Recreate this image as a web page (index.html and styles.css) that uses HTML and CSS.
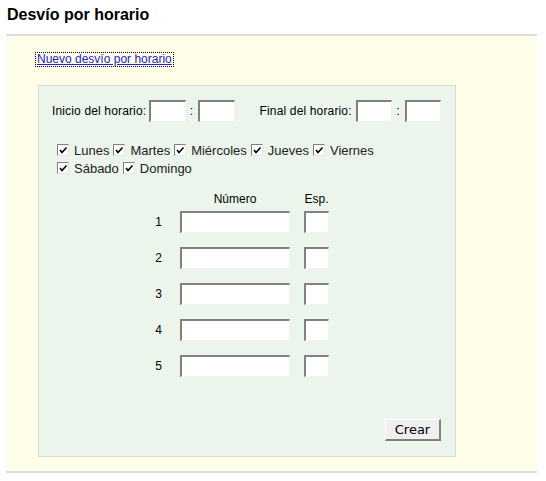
FILE: index.html
```html
<!DOCTYPE html>
<html lang="es">
<head>
<meta charset="utf-8">
<title>Desvío por horario</title>
<link rel="stylesheet" href="styles.css">
</head>
<body>
<div class="page">
  <h1 class="title">Desvío por horario</h1>
  <div class="box">
    <div class="linkline"><a class="newlink" href="#">Nuevo desvío por horario</a></div>
    <div class="panel">
      <div class="timerow">
        <span class="lbl">Inicio del horario:</span>
        <span class="field time"></span>
        <span class="colon">:</span>
        <span class="field time"></span>
        <span class="lbl final">Final del horario:</span>
        <span class="field time"></span>
        <span class="colon">:</span>
        <span class="field time"></span>
      </div>
      <div class="days">
        <div class="dayrow">
          <span class="cb"><svg viewBox="0 0 12 12" width="12" height="12"><polyline points="3,6 5,8.5 9.5,3.5" fill="none" stroke="#000" stroke-width="1.6"/></svg></span><span class="day">Lunes</span>
          <span class="cb"><svg viewBox="0 0 12 12" width="12" height="12"><polyline points="3,6 5,8.5 9.5,3.5" fill="none" stroke="#000" stroke-width="1.6"/></svg></span><span class="day">Martes</span>
          <span class="cb"><svg viewBox="0 0 12 12" width="12" height="12"><polyline points="3,6 5,8.5 9.5,3.5" fill="none" stroke="#000" stroke-width="1.6"/></svg></span><span class="day">Miércoles</span>
          <span class="cb"><svg viewBox="0 0 12 12" width="12" height="12"><polyline points="3,6 5,8.5 9.5,3.5" fill="none" stroke="#000" stroke-width="1.6"/></svg></span><span class="day">Jueves</span>
          <span class="cb"><svg viewBox="0 0 12 12" width="12" height="12"><polyline points="3,6 5,8.5 9.5,3.5" fill="none" stroke="#000" stroke-width="1.6"/></svg></span><span class="day">Viernes</span>
        </div>
        <div class="dayrow">
          <span class="cb"><svg viewBox="0 0 12 12" width="12" height="12"><polyline points="3,6 5,8.5 9.5,3.5" fill="none" stroke="#000" stroke-width="1.6"/></svg></span><span class="day">Sábado</span>
          <span class="cb"><svg viewBox="0 0 12 12" width="12" height="12"><polyline points="3,6 5,8.5 9.5,3.5" fill="none" stroke="#000" stroke-width="1.6"/></svg></span><span class="day">Domingo</span>
        </div>
      </div>
      <div class="numhead">
        <span></span>
        <span class="hcell">Número</span>
        <span class="hcell esphead">Esp.</span>
      </div>
      <div class="numgrid">
        <span class="idx">1</span><span class="field num"></span><span class="field esp"></span>
        <span class="idx">2</span><span class="field num"></span><span class="field esp"></span>
        <span class="idx">3</span><span class="field num"></span><span class="field esp"></span>
        <span class="idx">4</span><span class="field num"></span><span class="field esp"></span>
        <span class="idx">5</span><span class="field num"></span><span class="field esp"></span>
      </div>
      <div class="actions">
        <button class="btn" type="button">Crear</button>
      </div>
    </div>
  </div>
</div>
</body>
</html>
```

FILE: styles.css
```css
html, body {
  margin: 0;
  padding: 0;
  background: #ffffff;
}
body {
  font-family: "Liberation Sans", Arial, sans-serif;
  font-size: 12px;
  color: #000;
}
.page {
  margin-left: 6px;
  width: 531px;
}
.title {
  margin: 0;
  box-sizing: border-box;
  height: 36px;
  padding: 5px 0 0 1px;
  font-size: 16px;
  line-height: 19px;
  font-weight: bold;
  color: #000;
  border-bottom: 2px solid #dcdcdc;
}
.box {
  background: #ffffe9;
  border-bottom: 2px solid #dcdcdc;
  padding: 17px 0 14px 32px;
}
.linkline {
  height: 14px;
  line-height: 13px;
}
.newlink {
  display: inline-block;
  margin-left: -2px;
  padding: 0 1px;
  color: #2323c8;
  text-decoration: underline;
  outline: 1px dotted #000;
  outline-offset: 0;
  line-height: 13px;
}
.panel {
  margin-top: 18px;
  width: 418px;
  height: 372px;
  box-sizing: border-box;
  background: #ebf5ec;
  border: 1px solid #d9d9d9;
  padding: 14px 14px 14px 13px;
}
.timerow {
  display: flex;
  align-items: center;
  height: 22px;
}
.lbl {
  white-space: nowrap;
  margin-right: 3px;
  letter-spacing: 0.15px;
}
.final {
  margin-left: 25px;
  margin-right: 4px;
}
.colon {
  margin: 0 5px 0 4px;
}
.field {
  display: block;
  box-sizing: border-box;
  height: 22px;
  background: #fff;
  border-top: 2px solid #808080;
  border-left: 2px solid #808080;
  border-right: 1px solid #f2f2f2;
  border-bottom: 1px solid #f2f2f2;
}
.time {
  width: 39px;
}
.days {
  margin-top: 19px;
  padding-left: 5px;
  font-size: 13px;
}
.dayrow {
  display: flex;
  align-items: center;
  height: 18px;
}
.cb {
  display: block;
  width: 12px;
  height: 12px;
  box-sizing: border-box;
  background: #fff;
  border-top: 1px solid #808080;
  border-left: 1px solid #808080;
  border-right: 1px solid #e4e4e4;
  border-bottom: 1px solid #e4e4e4;
  position: relative;
}
.cb svg {
  position: absolute;
  left: -1px;
  top: -1px;
}
.day {
  margin: 0 4px 0 5px;
  color: #222;
}
.numhead {
  display: grid;
  grid-template-columns: 19px 110px 27px;
  column-gap: 12px;
  margin: 15px 0 5px 97px;
  height: 14px;
  line-height: 14px;
}
.hcell {
  text-align: center;
}
.esphead {
  padding-left: 2px;
}
.numgrid {
  display: grid;
  grid-template-columns: 19px 110px 27px;
  grid-auto-rows: 22px;
  column-gap: 12px;
  row-gap: 14px;
  margin-left: 97px;
  align-items: center;
}
.idx {
  text-align: center;
}
.num {
  width: 110px;
}
.esp {
  width: 25px;
  justify-self: end;
}
.actions {
  display: flex;
  justify-content: flex-end;
  margin-top: 42px;
}
.btn {
  width: 56px;
  height: 22px;
  box-sizing: border-box;
  padding: 0;
  font-family: "DejaVu Sans", sans-serif;
  font-size: 13px;
  color: #000;
  background: #efefef;
  border-top: 1px solid #ffffff;
  border-left: 1px solid #ffffff;
  border-right: 2px solid #808080;
  border-bottom: 2px solid #808080;
  border-radius: 0;
}
```
